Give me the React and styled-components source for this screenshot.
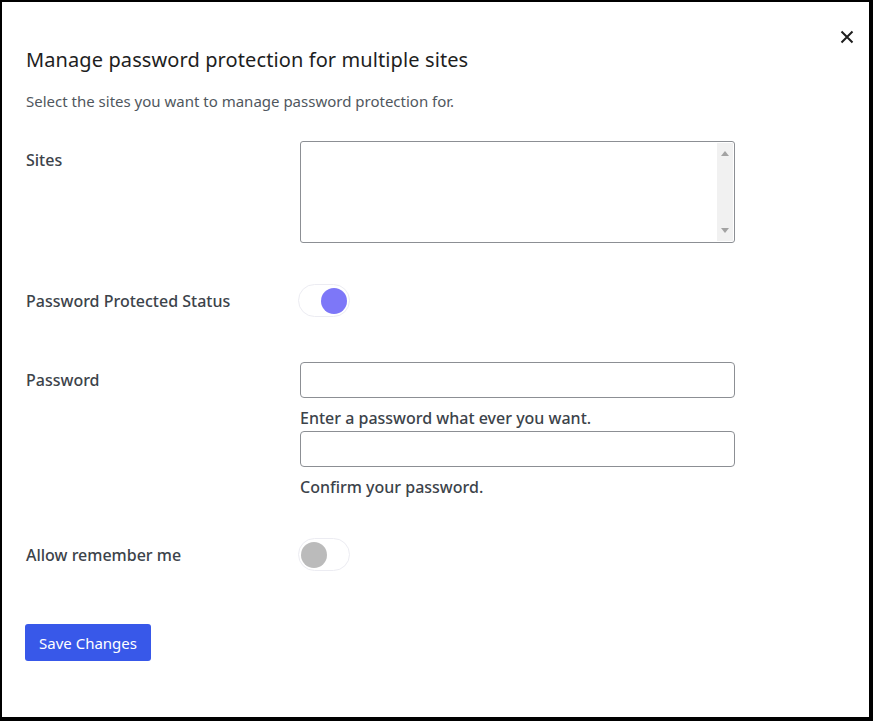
import React, { useState } from "react";
import styled, { createGlobalStyle } from "styled-components";

const GlobalStyle = createGlobalStyle`
  html, body {
    margin: 0;
    padding: 0;
    background: #000;
  }
  body {
    font-family: "Noto Sans", "Open Sans", sans-serif;
    color: #1e1e1e;
  }
`;

export default function App() {
  const [status, setStatus] = useState(true);
  const [remember, setRemember] = useState(false);

  return (
    <>
      <GlobalStyle />
      <Modal>
        <CloseButton aria-label="Close">
          <svg width="14" height="14" viewBox="0 0 14 14">
            <path d="M1.5 1.5 L12.5 12.5 M12.5 1.5 L1.5 12.5" stroke="#1e1e1e" strokeWidth="2" />
          </svg>
        </CloseButton>
        <Title>Manage password protection for multiple sites</Title>
        <Intro>Select the sites you want to manage password protection for.</Intro>

        <Row $gap={41}>
          <Label $top={9}>Sites</Label>
          <SitesBox>
            <Scrollbar>
              <Arrow $dir="up" />
              <Arrow $dir="down" />
            </Scrollbar>
          </SitesBox>
        </Row>

        <Row $gap={45} $center>
          <Label>Password Protected Status</Label>
          <Toggle $on={status} onClick={() => setStatus(!status)}>
            <Knob $on={status} />
          </Toggle>
        </Row>

        <Row $gap={41}>
          <Label $top={8}>Password</Label>
          <Field>
            <Input type="password" />
            <Hint>Enter a password what ever you want.</Hint>
            <Input type="password" />
            <Hint>Confirm your password.</Hint>
          </Field>
        </Row>

        <Row $gap={53} $center>
          <Label>Allow remember me</Label>
          <Toggle $on={remember} onClick={() => setRemember(!remember)}>
            <Knob $on={remember} />
          </Toggle>
        </Row>

        <SaveButton>Save Changes</SaveButton>
      </Modal>
    </>
  );
}

const Modal = styled.div`
  position: relative;
  box-sizing: border-box;
  margin: 2px 4px 0 2px;
  height: 715px;
  background: #fff;
  padding: 44px 24px 0 24px;
`;

const CloseButton = styled.button`
  position: absolute;
  top: 28px;
  right: 15px;
  width: 14px;
  height: 14px;
  padding: 0;
  border: 0;
  background: none;
  display: flex;
  cursor: pointer;
`;

const Title = styled.h1`
  margin: 0;
  font-size: 20px;
  font-weight: 400;
  line-height: 28px;
  letter-spacing: 0.1px;
  color: #1e1e1e;
`;

const Intro = styled.p`
  margin: 17px 0 30px;
  font-size: 15px;
  line-height: 20px;
  color: #50575e;
`;

const Row = styled.div`
  display: flex;
  align-items: ${({ $center }) => ($center ? "center" : "flex-start")};
  margin-bottom: ${({ $gap }) => $gap}px;
`;

const Label = styled.div`
  width: 274px;
  flex: none;
  padding-top: ${({ $top }) => $top || 0}px;
  font-size: 16px;
  font-weight: 500;
  line-height: 20px;
  color: #3c434a;
`;

const SitesBox = styled.div`
  box-sizing: border-box;
  width: 435px;
  height: 102px;
  border: 1px solid #8c8f94;
  border-radius: 3px;
  display: flex;
  justify-content: flex-end;
  padding: 1px;
`;

const Scrollbar = styled.div`
  width: 16px;
  background: #f1f1f1;
  display: flex;
  flex-direction: column;
  justify-content: space-between;
  align-items: center;
  padding: 8px 0;
`;

const Arrow = styled.span`
  width: 0;
  height: 0;
  border-left: 4px solid transparent;
  border-right: 4px solid transparent;
  ${({ $dir }) =>
    $dir === "up"
      ? "border-bottom: 5px solid #a3a3a3;"
      : "border-top: 5px solid #a3a3a3;"}
`;

const Toggle = styled.button`
  box-sizing: border-box;
  width: 52px;
  height: 33px;
  margin-left: -2px;
  padding: 2px;
  border: 1px solid #ececf2;
  border-radius: 17px;
  background: #fff;
  display: flex;
  align-items: center;
  justify-content: ${({ $on }) => ($on ? "flex-end" : "flex-start")};
  cursor: pointer;
`;

const Knob = styled.span`
  width: 26px;
  height: 26px;
  border-radius: 50%;
  background: ${({ $on }) => ($on ? "#7d77f8" : "#bbbbbb")};
`;

const Field = styled.div`
  display: flex;
  flex-direction: column;
  width: 435px;
`;

const Input = styled.input`
  box-sizing: border-box;
  width: 100%;
  height: 36px;
  margin: 0;
  border: 1px solid #8c8f94;
  border-radius: 4px;
  background: #fff;
  font-family: inherit;
  font-size: 14px;
  padding: 0 8px;
`;

const Hint = styled.div`
  font-size: 16px;
  font-weight: 500;
  line-height: 20px;
  color: #3c434a;
  padding: 10px 0 3px;

  &:last-child {
    padding-bottom: 0;
  }
`;

const SaveButton = styled.button`
  display: block;
  width: 126px;
  height: 37px;
  border: 0;
  border-radius: 3px;
  background: #3858e9;
  color: #fff;
  font-family: inherit;
  font-size: 15px;
  padding: 0;
  margin-left: -1px;
  cursor: pointer;
`;
